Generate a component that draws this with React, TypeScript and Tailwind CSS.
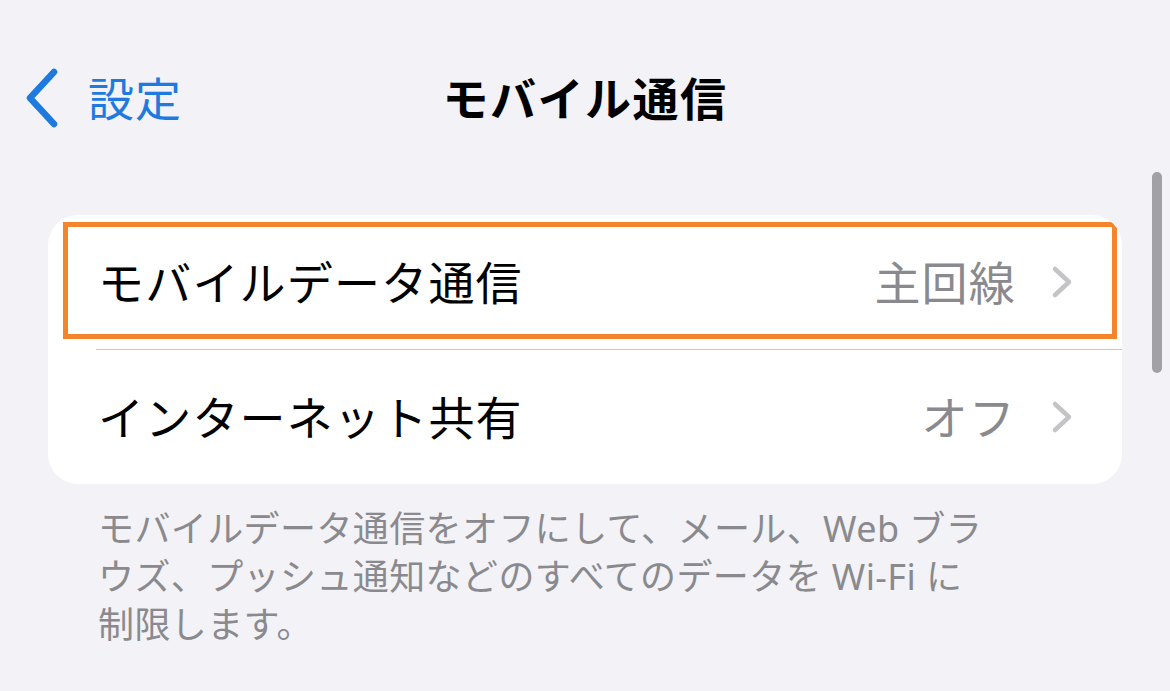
const font = { fontFamily: '"Noto Sans", "Noto Sans CJK JP", sans-serif' }

function BackChevron() {
  return (
    <svg width="40" height="60" viewBox="0 0 40 60" className="shrink-0">
      <path d="M30 4 L6 30 L30 56" fill="none" stroke="#1f7ae0" strokeWidth="6.5" strokeLinecap="round" strokeLinejoin="round" />
    </svg>
  )
}

function Disclosure() {
  return (
    <svg width="24" height="34" viewBox="0 0 24 34" className="ml-[34px] shrink-0">
      <path d="M5 4 L19 17 L5 30" fill="none" stroke="#c4c4c7" strokeWidth="4.5" strokeLinecap="round" strokeLinejoin="round" />
    </svg>
  )
}

function Row({ label, value, highlighted }: { label: string; value: string; highlighted?: boolean }) {
  return (
    <div className="relative flex h-[134px] items-center pl-[50px] pr-[48px]">
      {highlighted && (
        <div className="pointer-events-none absolute left-[15px] right-[5px] top-[7px] bottom-[10px] border-[5px] border-[#f5852c]" />
      )}
      <span className="text-[46px] leading-none tracking-[1.2px] text-black">{label}</span>
      <span className="ml-auto text-[46px] leading-none tracking-[1.2px] text-[#8a8a8e]">{value}</span>
      <Disclosure />
    </div>
  )
}

export default function App() {
  return (
    <div className="relative h-[691px] w-[1170px] overflow-hidden bg-[#f2f2f7]" style={font}>
      {/* Nav bar */}
      <div className="relative mt-[50px] flex h-[95px] items-center pl-[24px]">
        <div className="flex items-center gap-[24px] text-[#1f7ae0]">
          <BackChevron />
          <span className="text-[46px] leading-none tracking-[1px]">設定</span>
        </div>
        <div className="absolute inset-0 flex items-center justify-center">
          <span className="text-[46px] font-bold leading-none tracking-[1.5px] text-black">モバイル通信</span>
        </div>
      </div>

      {/* Group */}
      <div className="mx-[48px] mt-[70px] overflow-hidden rounded-[30px] bg-white">
        <Row label="モバイルデータ通信" value="主回線" highlighted />
        <div className="ml-[48px] h-px bg-[#c8c8cc]" />
        <Row label="インターネット共有" value="オフ" />
      </div>

      <p className="mt-[21px] pl-[98px] text-[36px] leading-[48px] tracking-[0.4px] text-[#8a8a8e]">
        モバイルデータ通信をオフにして、メール、Web ブラ
        <br />
        ウズ、プッシュ通知などのすべてのデータを Wi-Fi に
        <br />
        制限します。
      </p>

      {/* Scroll indicator */}
      <div className="absolute left-[1152px] top-[172px] h-[201px] w-[10px] rounded-full bg-[#a1a1a6]" />
    </div>
  )
}
